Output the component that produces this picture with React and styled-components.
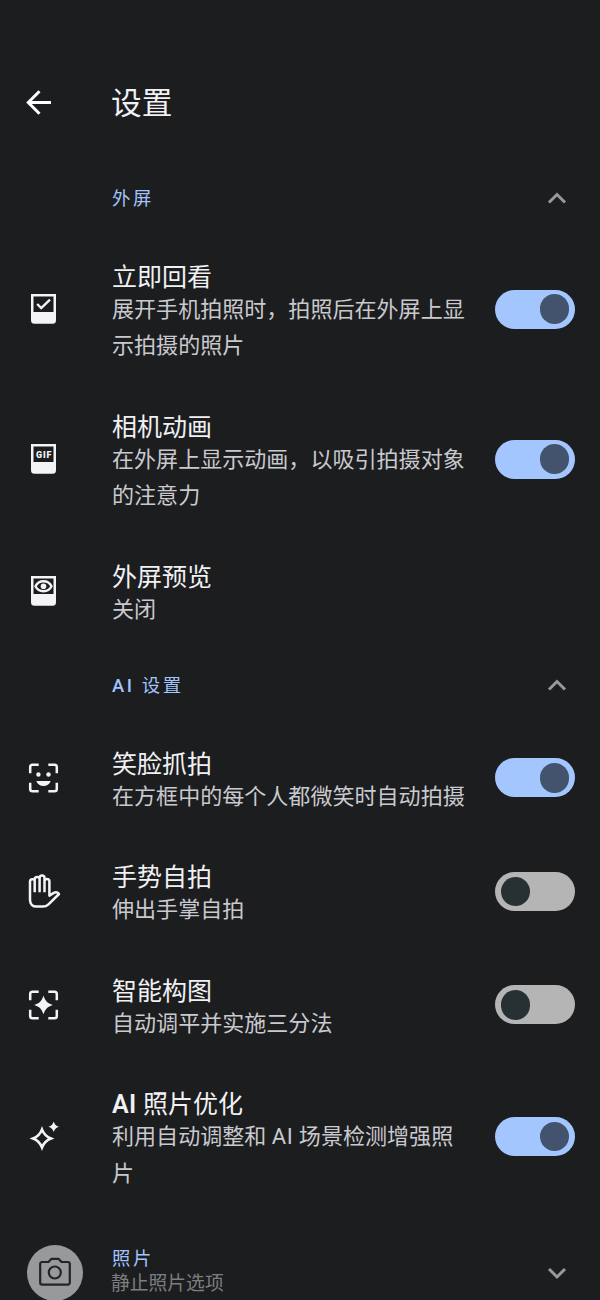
import React, { useState } from 'react';
import styled, { createGlobalStyle } from 'styled-components';

const GlobalStyle = createGlobalStyle`
  * {
    box-sizing: border-box;
  }

  body {
    margin: 0;
    background: #1c1d1f;
    overflow: hidden;
  }
`;

const Screen = styled.main`
  width: 600px;
  height: 1300px;
  overflow: hidden;
  background: #1c1d1f;
  color: #f1f1f3;
  font-family: Roboto, 'Noto Sans CJK SC', sans-serif;
`;

const Header = styled.header`
  display: flex;
  align-items: center;
  height: 160.5px;
  padding: 45px 24px 0;
`;

const BackButton = styled.button`
  display: flex;
  width: 87px;
  padding: 0;
  border: none;
  background: none;
  color: #ffffff;
`;

const PageTitle = styled.h1`
  margin: 0;
  padding-top: 3px;
  font-size: 30.7px;
  font-weight: 400;
  line-height: 40px;
`;

const SectionHeader = styled.div`
  display: flex;
  align-items: center;
  justify-content: space-between;
  height: 73.5px;
  padding: 3px 31px 0 112px;
`;

const SectionTitle = styled.h2`
  margin: 0;
  color: #a3c4fb;
  font-size: 18.4px;
  font-weight: 400;
  line-height: 26px;
  letter-spacing: 2.6px;
`;

const Row = styled.div`
  display: flex;
  align-items: center;
  padding: 0 25px;
`;

const RowIcon = styled.div`
  display: flex;
  flex: none;
  width: 87px;
  color: #f4f4f6;
`;

const RowText = styled.div`
  width: 358px;
  padding: 29.5px 0 19.5px;
`;

const RowTitle = styled.h3`
  margin: 0;
  font-size: 25px;
  font-weight: 400;
  line-height: 28px;
  white-space: nowrap;
`;

const RowDescription = styled.p`
  margin: 0;
  color: #c9c9ce;
  font-size: 22.05px;
  font-weight: 400;
  line-height: 36.5px;
  white-space: pre-line;
`;

const Latin = styled.span`
  font-weight: ${({ $weight }) => $weight || 500};
  letter-spacing: ${({ $spacing }) => $spacing};
`;

const Toggle = styled.button`
  display: flex;
  flex: none;
  align-items: center;
  justify-content: ${({ $on }) => ($on ? 'flex-end' : 'flex-start')};
  width: 80px;
  height: 39px;
  margin-left: auto;
  padding: 0 5.8px;
  border: none;
  border-radius: 20px;
  background: ${({ $on }) => ($on ? '#a3c6ff' : '#b5b5b5')};
`;

const Knob = styled.span`
  width: 29.5px;
  height: 29.5px;
  border-radius: 50%;
  background: ${({ $on }) => ($on ? '#43536d' : '#273033')};
`;

const CategoryRow = styled.div`
  display: flex;
  align-items: center;
  padding: 33px 31px 0 27px;
`;

const CategoryIcon = styled.div`
  display: flex;
  align-items: center;
  justify-content: center;
  width: 56px;
  height: 56px;
  margin-right: 29px;
  border-radius: 50%;
  background: #98999b;
  color: #232426;
`;

const CategoryText = styled.div`
  flex: 1;
  padding-bottom: 4px;
`;

const CategoryDescription = styled.p`
  margin: 0;
  margin-left: -1px;
  color: #7d7d80;
  font-size: 18.8px;
  line-height: 24px;
`;

const BackIcon = () => (
  <svg width="30" height="30" viewBox="0 0 30 30" fill="none" stroke="currentColor" strokeWidth="3">
    <path d="M27 14.500H4.500M15.500 3.300 4.300 14.500l11.200 11.200" />
  </svg>
);

const Chevron = ({ down }) => (
  <svg width="24" height="24" viewBox="0 0 24 24" fill="none" stroke="#98999b" strokeWidth="3">
    <path d={down ? 'M4 8l8 8 8-8' : 'M4 15.500l8-8 8 8'} />
  </svg>
);

const Icon = ({ children }) => (
  <svg width="36" height="36" viewBox="0 0 36 36" fill="none">
    {children}
  </svg>
);

// Phone body with a cut-out cover screen, the glyph goes inside the screen
const CoverScreen = ({ children }) => (
  <Icon>
    <path
      fill="currentColor"
      fillRule="evenodd"
      d="M6 3h25v26.2a3.5 3.5 0 0 1-3.5 3.5h-18A3.5 3.5 0 0 1 6 29.2zM8.500 5.500V21h20V5.500z"
    />
    {children}
  </Icon>
);

const ReviewIcon = () => (
  <CoverScreen>
    <path d="M12.200 13l4 4 8.800-8.400" stroke="currentColor" strokeWidth="2.400" />
  </CoverScreen>
);

const GifIcon = () => (
  <CoverScreen>
    <text
      x="11"
      y="16.500"
      fill="currentColor"
      fontFamily="Roboto, sans-serif"
      fontSize="9"
      fontWeight="900"
      textLength="15.400"
    >
      GIF
    </text>
  </CoverScreen>
);

const PreviewIcon = () => (
  <CoverScreen>
    <path
      d="M10.500 13.300c1.600-3.400 4.600-5 8-5s6.400 1.600 8 5c-1.600 3.400-4.600 5-8 5s-6.400-1.600-8-5z"
      stroke="currentColor"
      strokeWidth="2.400"
    />
    <circle cx="18.500" cy="13.300" r="2.800" fill="currentColor" />
  </CoverScreen>
);

const Frame = ({ children }) => (
  <Icon>
    <path
      d="M5.200 13.200V7a2.300 2.300 0 0 1 2.300-2.300h6.200M23.300 4.700h6.200A2.300 2.300 0 0 1 31.800 7v6.200M31.800 22.800V29a2.300 2.300 0 0 1-2.300 2.300h-6.200M13.700 31.300H7.500A2.300 2.300 0 0 1 5.200 29v-6.200"
      stroke="currentColor"
      strokeWidth="2.500"
    />
    {children}
  </Icon>
);

const SmileIcon = () => (
  <Frame>
    <circle cx="13.400" cy="14.500" r="2.200" fill="currentColor" />
    <circle cx="23.500" cy="14.500" r="2.200" fill="currentColor" />
    <path d="M11.300 21h14.400c-1.200 3.300-4 5-7.200 5s-6-1.700-7.200-5z" fill="currentColor" />
  </Frame>
);

const HandIcon = () => (
  <Icon>
    <path
      d="M9.700 19.200V8.200C9.700 5.400 5 5.400 5 8.700V27c0 4 2.600 6.600 6.400 6.600h6.200c2.600 0 4.200-.6 5.900-2.300L34 21c-1.500-2-3.400-2.200-5.200-1.100l-4.400 2.700V8.300c0-3-4.900-3-4.900 0M9.700 8.500V6.200c0-3.100 4.900-3.100 4.900 0v13M14.600 6.500V5c0-3.200 4.900-3.200 4.900 0v14.200"
      stroke="currentColor"
      strokeWidth="2.500"
      strokeLinejoin="round"
    />
  </Icon>
);

const CompositionIcon = () => (
  <Frame>
    <path
      d="M18.500 8.700c1.900 5.400 3.900 7.400 9.300 9.300-5.400 1.900-7.400 3.900-9.300 9.300-1.900-5.400-3.900-7.400-9.300-9.300 5.400-1.900 7.400-3.900 9.300-9.300z"
      fill="currentColor"
    />
  </Frame>
);

const SparkleIcon = () => (
  <Icon>
    <path
      d="M17 10.500c1.900 5 4 7.100 9 9-5 1.900-7.100 4-9 9-1.900-5-4-7.100-9-9 5-1.900 7.100-4 9-9z"
      stroke="currentColor"
      strokeWidth="2.500"
    />
    <path
      d="M28.700 2.500c1.100 3.100 2.200 4.200 5.300 5.300-3.100 1.100-4.200 2.200-5.300 5.300-1.100-3.100-2.200-4.200-5.300-5.300 3.100-1.100 4.200-2.200 5.300-5.300z"
      fill="currentColor"
    />
  </Icon>
);

const CameraIcon = () => (
  <svg width="34" height="32" viewBox="0 0 34 32" fill="none" stroke="currentColor" strokeWidth="2.200">
    <path
      d="M4 5h6.500l3-3.200h7l3 3.200H30a1.800 1.800 0 0 1 1.800 1.800v19A1.800 1.800 0 0 1 30 27.600H4a1.800 1.800 0 0 1-1.800-1.800v-19A1.800 1.800 0 0 1 4 5z"
      strokeLinejoin="round"
    />
    <circle cx="16.800" cy="15.500" r="6" />
  </svg>
);

const coverSettings = [
  {
    id: 'review',
    icon: ReviewIcon,
    title: '立即回看',
    description: '展开手机拍照时，拍照后在外屏上显\n示拍摄的照片',
    on: true
  },
  {
    id: 'animation',
    icon: GifIcon,
    title: '相机动画',
    description: '在外屏上显示动画，以吸引拍摄对象\n的注意力',
    on: true
  },
  { id: 'preview', icon: PreviewIcon, title: '外屏预览', description: '关闭' }
];

const aiSettings = [
  {
    id: 'smile',
    icon: SmileIcon,
    title: '笑脸抓拍',
    description: '在方框中的每个人都微笑时自动拍摄',
    on: true
  },
  { id: 'gesture', icon: HandIcon, title: '手势自拍', description: '伸出手掌自拍', on: false },
  {
    id: 'composition',
    icon: CompositionIcon,
    title: '智能构图',
    description: '自动调平并实施三分法',
    on: false
  },
  {
    id: 'optimize',
    icon: SparkleIcon,
    title: <><Latin $weight={600} $spacing="0.4px">AI</Latin> 照片优化</>,
    description: <>利用自动调整和 <Latin $weight={400} $spacing="0.6px">AI</Latin> 场景检测增强照{'\n'}片</>,
    on: true
  }
];

const Setting = ({ icon: SettingIcon, title, description, on }) => {
  const [checked, setChecked] = useState(on);

  return (
    <Row>
      <RowIcon>
        <SettingIcon />
      </RowIcon>
      <RowText>
        <RowTitle>{title}</RowTitle>
        <RowDescription>{description}</RowDescription>
      </RowText>
      {on !== undefined && (
        <Toggle role="switch" aria-checked={checked} $on={checked} onClick={() => setChecked(!checked)}>
          <Knob $on={checked} />
        </Toggle>
      )}
    </Row>
  );
};

const Section = ({ title, items }) => (
  <section>
    <SectionHeader>
      <SectionTitle>{title}</SectionTitle>
      <Chevron />
    </SectionHeader>
    {items.map(({ id, ...item }) => (
      <Setting key={id} {...item} />
    ))}
  </section>
);

const App = () => (
  <>
    <GlobalStyle />
    <Screen lang="zh-CN">
      <Header>
        <BackButton aria-label="返回">
          <BackIcon />
        </BackButton>
        <PageTitle>设置</PageTitle>
      </Header>
      <Section title="外屏" items={coverSettings} />
      <Section title={<><Latin>AI</Latin> 设置</>} items={aiSettings} />
      <CategoryRow>
        <CategoryIcon>
          <CameraIcon />
        </CategoryIcon>
        <CategoryText>
          <SectionTitle>照片</SectionTitle>
          <CategoryDescription>静止照片选项</CategoryDescription>
        </CategoryText>
        <Chevron down />
      </CategoryRow>
    </Screen>
  </>
);

export default App;
